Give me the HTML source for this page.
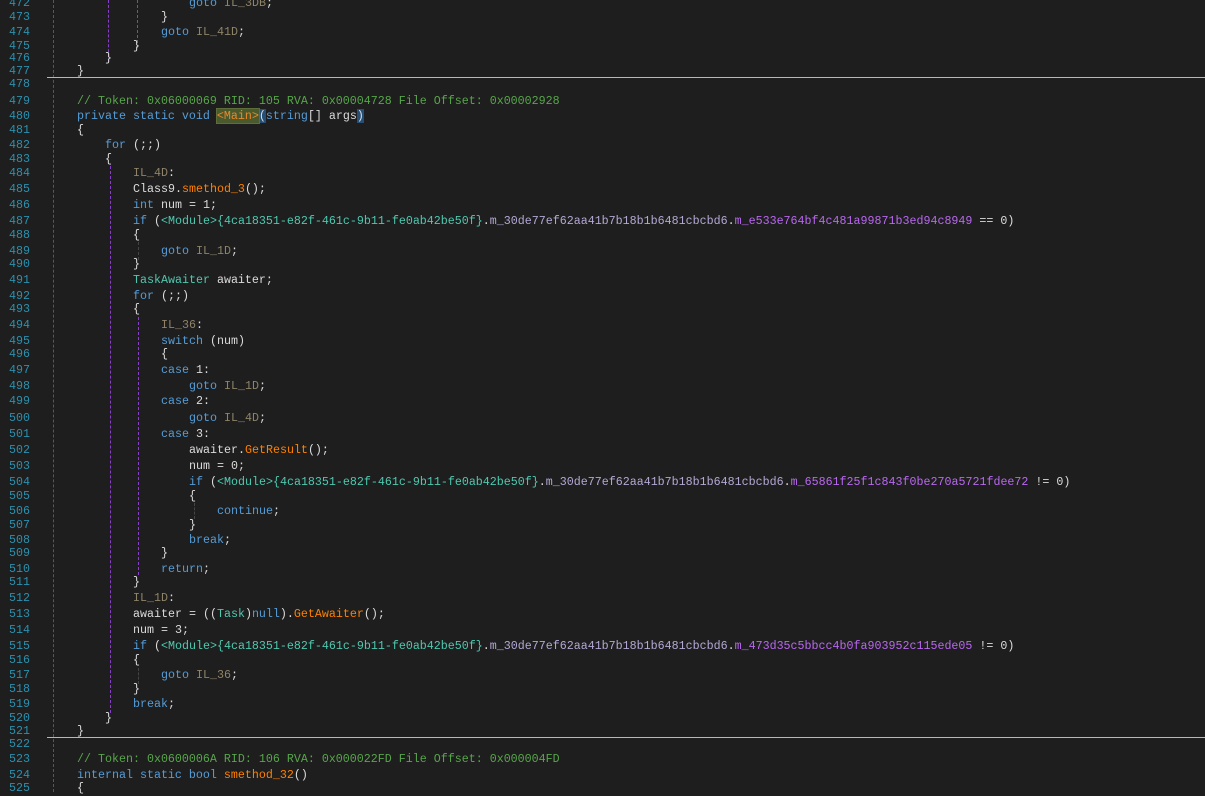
<!DOCTYPE html>
<html><head><meta charset="utf-8"><style>
body{margin:0;background:#1e1e1e;width:1205px;height:792px;overflow:hidden;position:relative;font-family:"Liberation Mono",monospace;font-size:11.67px;color:#dcdcdc}
.r{position:absolute;left:0;height:15px;line-height:15px;white-space:pre}
.n{position:absolute;left:0;width:30px;text-align:right;color:#2b91af}
.x{position:absolute;left:77px}
.k{color:#569cd6}.c{color:#57a64a}.l{color:#8f8468}.t{color:#4ec9b0}.m{color:#ff8000}.g{color:#4ec9b0}.f{color:#b4a8d4}.p{color:#b968f0}
.sep{position:absolute;left:47px;right:0;height:1px;background:#b8b8b8}
.v{position:absolute;width:0;border-left:1px dashed}
</style></head><body>
<div class="v" style="left:53px;top:0;height:792px;border-color:#2e6b66"></div>
<div class="v" style="left:108px;top:0;height:62px;border-color:#8a3fc8"></div>
<div class="v" style="left:137px;top:0;height:48px;border-color:#8a3fc8"></div>
<div class="v" style="left:110px;top:166px;height:547px;border-color:#8a3fc8"></div>
<div class="v" style="left:138px;top:317px;height:258px;border-color:#8a3fc8"></div>
<div class="v" style="left:138px;top:242px;height:18px;border-color:#444"></div>
<div class="v" style="left:138px;top:668px;height:16px;border-color:#444"></div>
<div class="v" style="left:194px;top:503px;height:16px;border-color:#444"></div>
<div class="sep" style="top:77px"></div>
<div class="sep" style="top:737px"></div>
<div id="c"></div>
<script>
var Y={472:3,473:17,474:32,475:46,476:58,477:71,478:84,479:101,480:116,481:130,482:145,483:159,484:173,485:189,486:205,487:221,488:235,489:251,490:264,491:280,492:296,493:309,494:325,495:341,496:354,497:370,498:386,499:401,500:418,501:434,502:450,503:466,504:482,505:496,506:511,507:525,508:540,509:553,510:569,511:582,512:598,513:614,514:630,515:646,516:660,517:675,518:689,519:704,520:718,521:731,522:744,523:759,524:775,525:788};
function s(c,t){return '<span class="'+c+'">'+t+'</span>'}
var mod=s('g','&lt;Module&gt;{4ca18351-e82f-461c-9b11-fe0ab42be50f}')+'.'+s('f','m_30de77ef62aa41b7b18b1b6481cbcbd6')+'.';
var L={
472:[4,s('k','goto')+' '+s('l','IL_3DB')+';'],
473:[3,'}'],474:[3,s('k','goto')+' '+s('l','IL_41D')+';'],475:[2,'}'],476:[1,'}'],477:[0,'}'],478:[0,''],
479:[0,s('c','// Token: 0x06000069 RID: 105 RVA: 0x00004728 File Offset: 0x00002928')],
480:[0,s('k','private static void')+' <span style="background:#4b5a2c;outline:1px solid #5d6e3a;color:#e8892c">&lt;Main&gt;</span><span style="background:#264f78">(</span>'+s('k','string')+'[] args<span style="background:#264f78">)</span>'],
481:[0,'{'],482:[1,s('k','for')+' (;;)'],483:[1,'{'],484:[2,s('l','IL_4D')+':'],
485:[2,'Class9.'+s('m','smethod_3')+'();'],486:[2,s('k','int')+' num = 1;'],
487:[2,s('k','if')+' ('+mod+s('p','m_e533e764bf4c481a99871b3ed94c8949')+' == 0)'],
488:[2,'{'],489:[3,s('k','goto')+' '+s('l','IL_1D')+';'],490:[2,'}'],
491:[2,s('t','TaskAwaiter')+' awaiter;'],492:[2,s('k','for')+' (;;)'],493:[2,'{'],
494:[3,s('l','IL_36')+':'],495:[3,s('k','switch')+' (num)'],496:[3,'{'],
497:[3,s('k','case')+' 1:'],498:[4,s('k','goto')+' '+s('l','IL_1D')+';'],
499:[3,s('k','case')+' 2:'],500:[4,s('k','goto')+' '+s('l','IL_4D')+';'],
501:[3,s('k','case')+' 3:'],502:[4,'awaiter.'+s('m','GetResult')+'();'],503:[4,'num = 0;'],
504:[4,s('k','if')+' ('+mod+s('p','m_65861f25f1c843f0be270a5721fdee72')+' != 0)'],
505:[4,'{'],506:[5,s('k','continue')+';'],507:[4,'}'],508:[4,s('k','break')+';'],509:[3,'}'],
510:[3,s('k','return')+';'],511:[2,'}'],512:[2,s('l','IL_1D')+':'],
513:[2,'awaiter = (('+s('t','Task')+')'+s('k','null')+').'+s('m','GetAwaiter')+'();'],514:[2,'num = 3;'],
515:[2,s('k','if')+' ('+mod+s('p','m_473d35c5bbcc4b0fa903952c115ede05')+' != 0)'],
516:[2,'{'],517:[3,s('k','goto')+' '+s('l','IL_36')+';'],518:[2,'}'],519:[2,s('k','break')+';'],
520:[1,'}'],521:[0,'}'],522:[0,''],
523:[0,s('c','// Token: 0x0600006A RID: 106 RVA: 0x000022FD File Offset: 0x000004FD')],
524:[0,s('k','internal static bool')+' '+s('m','smethod_32')+'()'],525:[0,'{']};
var h='';for(var n=472;n<=525;n++){var e=L[n];h+='<div class="r" style="top:'+(Y[n]-7)+'px;width:1205px"><span class="n">'+n+'</span><span class="x" style="left:'+(77+e[0]*28)+'px">'+e[1]+'</span></div>';}
document.getElementById('c').innerHTML=h;
</script>
</body></html>
